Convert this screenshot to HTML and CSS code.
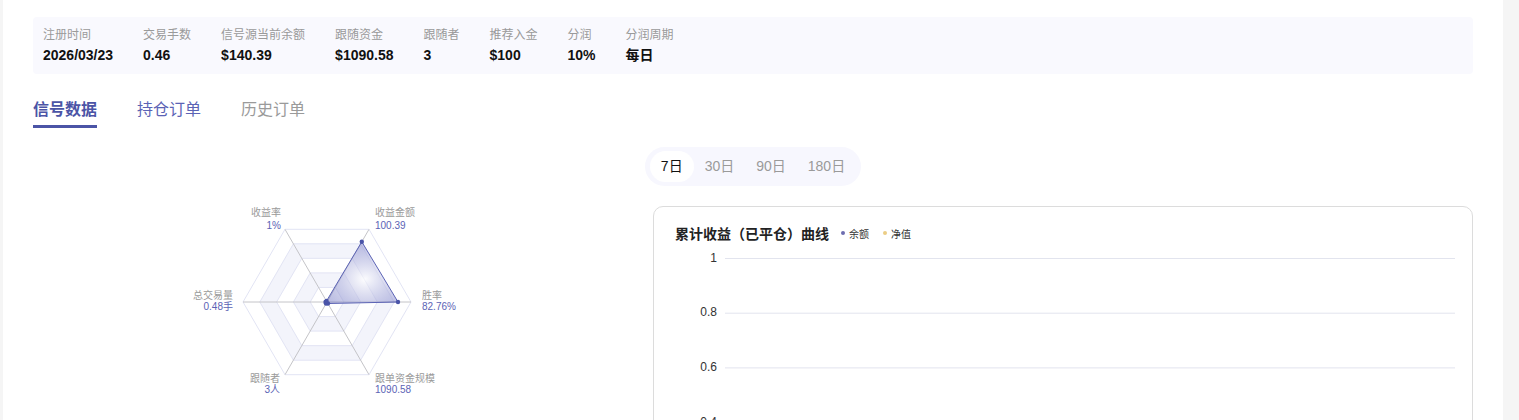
FILE: index.html
```html
<!DOCTYPE html>
<html lang="zh-CN">
<head>
  <meta charset="UTF-8" />
  <meta name="viewport" content="width=device-width, initial-scale=1.0" />
  <title>信号详情</title>
  <link rel="stylesheet" href="styles.css">
</head>
<body>
  <div class="page">
    <div class="stats">
      <div class="stat"><div class="stat-label">注册时间</div><div class="stat-value">2026/03/23</div></div>
      <div class="stat"><div class="stat-label">交易手数</div><div class="stat-value">0.46</div></div>
      <div class="stat"><div class="stat-label">信号源当前余额</div><div class="stat-value">$140.39</div></div>
      <div class="stat"><div class="stat-label">跟随资金</div><div class="stat-value">$1090.58</div></div>
      <div class="stat"><div class="stat-label">跟随者</div><div class="stat-value">3</div></div>
      <div class="stat"><div class="stat-label">推荐入金</div><div class="stat-value">$100</div></div>
      <div class="stat"><div class="stat-label">分润</div><div class="stat-value">10%</div></div>
      <div class="stat"><div class="stat-label">分润周期</div><div class="stat-value">每日</div></div>
    </div>

    <div class="tabs">
      <div class="tab active">信号数据</div>
      <div class="tab hover">持仓订单</div>
      <div class="tab">历史订单</div>
    </div>

    <div class="periods">
      <div class="period active">7日</div>
      <div class="period">30日</div>
      <div class="period">90日</div>
      <div class="period">180日</div>
    </div>

    <div class="panels">
      <div class="radar-col">
        <svg class="radar" viewBox="0 0 590 200" width="590" height="200">
          <defs>
            <radialGradient id="fillGrad" cx="0.55" cy="0.6" r="0.6">
              <stop offset="0" stop-color="#ffffff" stop-opacity="0.6"/>
              <stop offset="1" stop-color="#6a6fc0" stop-opacity="0.45"/>
            </radialGradient>
          </defs>
          <!-- split areas -->
          <path class="band" fill-rule="evenodd" d="M327.6,96 L310.8,66.9 L277.2,66.9 L260.4,96 L277.2,125.1 L310.8,125.1 Z M310.8,96 L302.4,81.45 L285.6,81.45 L277.2,96 L285.6,110.55 L302.4,110.55 Z"/>
          <path class="band" fill-rule="evenodd" d="M361.2,96 L327.6,37.8 L260.4,37.8 L226.8,96 L260.4,154.2 L327.6,154.2 Z M344.4,96 L319.2,52.35 L268.8,52.35 L243.6,96 L268.8,139.65 L319.2,139.65 Z"/>
          <!-- split lines -->
          <polygon class="ring" points="378,96 336,23.3 252,23.3 210,96 252,168.7 336,168.7"/>
          <polygon class="ring" points="361.2,96 327.6,37.8 260.4,37.8 226.8,96 260.4,154.2 327.6,154.2"/>
          <polygon class="ring" points="344.4,96 319.2,52.35 268.8,52.35 243.6,96 268.8,139.65 319.2,139.65"/>
          <polygon class="ring" points="327.6,96 310.8,66.9 277.2,66.9 260.4,96 277.2,125.1 310.8,125.1"/>
          <polygon class="ring" points="310.8,96 302.4,81.45 285.6,81.45 277.2,96 285.6,110.55 302.4,110.55"/>
          <!-- axes -->
          <line class="axis" x1="294" y1="96" x2="378" y2="96"/>
          <line class="axis" x1="294" y1="96" x2="336" y2="23.3"/>
          <line class="axis" x1="294" y1="96" x2="252" y2="23.3"/>
          <line class="axis" x1="294" y1="96" x2="210" y2="96"/>
          <line class="axis" x1="294" y1="96" x2="252" y2="168.7"/>
          <line class="axis" x1="294" y1="96" x2="336" y2="168.7"/>
          <!-- data -->
          <polygon class="area" points="328.8,35.8 365,96 295,97.5 293,97.5 292.5,96 293.5,95"/>
          <circle class="dot" cx="328.8" cy="35.8" r="2.2"/>
          <circle class="dot" cx="365" cy="96" r="2.2"/>
          <circle class="dot" cx="295" cy="97.5" r="2.2"/>
          <circle class="dot" cx="293" cy="97.5" r="2.2"/>
          <circle class="dot" cx="292.5" cy="96" r="2.2"/>
          <circle class="dot" cx="293.5" cy="95" r="2.2"/>
          <!-- labels -->
          <text class="r-name" x="248" y="7" text-anchor="end">收益率</text>
          <text class="r-val" x="248" y="20" text-anchor="end">1%</text>
          <text class="r-name" x="342" y="7">收益金额</text>
          <text class="r-val" x="342" y="20">100.39</text>
          <text class="r-name" x="389" y="90">胜率</text>
          <text class="r-val" x="389" y="101">82.76%</text>
          <text class="r-name" x="200" y="90" text-anchor="end">总交易量</text>
          <text class="r-val" x="200" y="101" text-anchor="end">0.48手</text>
          <text class="r-name" x="247" y="173" text-anchor="end">跟随者</text>
          <text class="r-val" x="247" y="184" text-anchor="end">3人</text>
          <text class="r-name" x="342" y="173">跟单资金规模</text>
          <text class="r-val" x="342" y="184">1090.58</text>
        </svg>
        <div class="sub-title">收益统计</div>
      </div>

      <div class="chart-card">
        <div class="chart-head">
          <span class="chart-title">累计收益（已平仓）曲线</span>
          <span class="legend"><i class="legend-dot balance"></i>余额</span>
          <span class="legend"><i class="legend-dot equity"></i>净值</span>
        </div>
        <svg class="chart" viewBox="0 0 818 330" width="818" height="330">
          <g class="grid">
            <line x1="71" y1="15.5" x2="801" y2="15.5"/>
            <line x1="71" y1="70.2" x2="801" y2="70.2"/>
            <line x1="71" y1="124.9" x2="801" y2="124.9"/>
            <line x1="71" y1="179.6" x2="801" y2="179.6"/>
            <line x1="71" y1="234.3" x2="801" y2="234.3"/>
            <line x1="71" y1="289" x2="801" y2="289"/>
          </g>
          <g class="ticks">
            <text x="63" y="15.5">1</text>
            <text x="63" y="70.2">0.8</text>
            <text x="63" y="124.9">0.6</text>
            <text x="63" y="179.6">0.4</text>
            <text x="63" y="234.3">0.2</text>
            <text x="63" y="289">0</text>
          </g>
        </svg>
      </div>
    </div>
  </div>
</body>
</html>
```

FILE: styles.css
```css
:root {
  --primary: #4b54a6;
  --primary-light: #5b63b5;
  --subtle: #9a9a9a;
  --text: #111;
  --soft-bg: #f9f9fe;
  --border: #dcdcdc;
}
body {
  margin: 0;
  padding: 0;
  background: #f5f5f5;
  font-family: "Liberation Sans", "Noto Sans CJK SC", sans-serif;
  color: var(--text);
  overflow: hidden;
}
.page {
  width: 1440px;
  margin-left: 3px;
  padding: 17px 30px 0;
  background: #fff;
  height: 420px;
}
.stats {
  display: flex;
  gap: 30px;
  padding: 9px 10px 9px;
  background: var(--soft-bg);
  border-radius: 4px;
}
.stat-label {
  font-size: 12px;
  line-height: 19px;
  color: var(--subtle);
}
.stat-value {
  font-size: 14px;
  line-height: 20px;
  font-weight: bold;
}
.tabs {
  display: flex;
  gap: 40px;
  margin-top: 25px;
}
.tab {
  position: relative;
  font-size: 16px;
  line-height: 22px;
  padding-bottom: 7px;
  color: var(--subtle);
}
.tab.hover {
  color: var(--primary-light);
}
.tab.active {
  color: var(--primary);
  font-weight: bold;
}
.tab.active::after {
  content: "";
  position: absolute;
  left: 0;
  right: 0;
  bottom: 0;
  height: 3px;
  background: var(--primary);
}
.periods {
  display: flex;
  width: max-content;
  margin: 19px auto 0;
  padding: 4px 5px;
  background: #f7f7fe;
  border-radius: 20px;
}
.period {
  padding: 0 11px;
  font-size: 14px;
  line-height: 31px;
  color: var(--subtle);
  border-radius: 16px;
}
.period.active {
  background: #fff;
  color: #111;
}
.panels {
  display: grid;
  grid-template-columns: 590px 1fr;
  gap: 30px;
  margin-top: 20px;
}
.radar {
  display: block;
}
.band {
  fill: #f3f4fb;
}
.ring {
  fill: none;
  stroke: #e2e4f4;
  stroke-width: 1;
}
.axis {
  stroke: #c4c4c8;
  stroke-width: 1;
}
.area {
  fill: url(#fillGrad);
  stroke: #5b63b5;
  stroke-width: 1;
  stroke-linejoin: round;
}
.dot {
  fill: #4a54a8;
}
.r-name,
.r-val {
  font-size: 10px;
  dominant-baseline: middle;
}
.r-name {
  fill: #9a9a9a;
}
.r-val {
  fill: #5b63b5;
}
.sub-title {
  margin: 13px 0 0 12px;
  font-size: 13px;
  line-height: 16px;
  color: #333;
}
.chart-card {
  border: 1px solid var(--border);
  border-radius: 10px;
  height: 380px;
}
.chart-head {
  display: flex;
  align-items: center;
  padding: 16px 21px 0;
  height: 20px;
}
.chart-title {
  font-size: 14px;
  font-weight: bold;
  color: #222;
  margin-right: 12px;
}
.legend {
  display: flex;
  align-items: center;
  font-size: 10px;
  color: #333;
  margin-right: 14px;
}
.legend-dot {
  width: 4px;
  height: 4px;
  border-radius: 50%;
  margin-right: 4px;
}
.legend-dot.balance {
  background: #6d6db0;
}
.legend-dot.equity {
  background: #ebcd85;
}
.chart {
  display: block;
}
.grid line {
  stroke: #e2e4ee;
  stroke-width: 1;
}
.ticks text {
  font-size: 12px;
  fill: #333;
  text-anchor: end;
  dominant-baseline: middle;
}
```
